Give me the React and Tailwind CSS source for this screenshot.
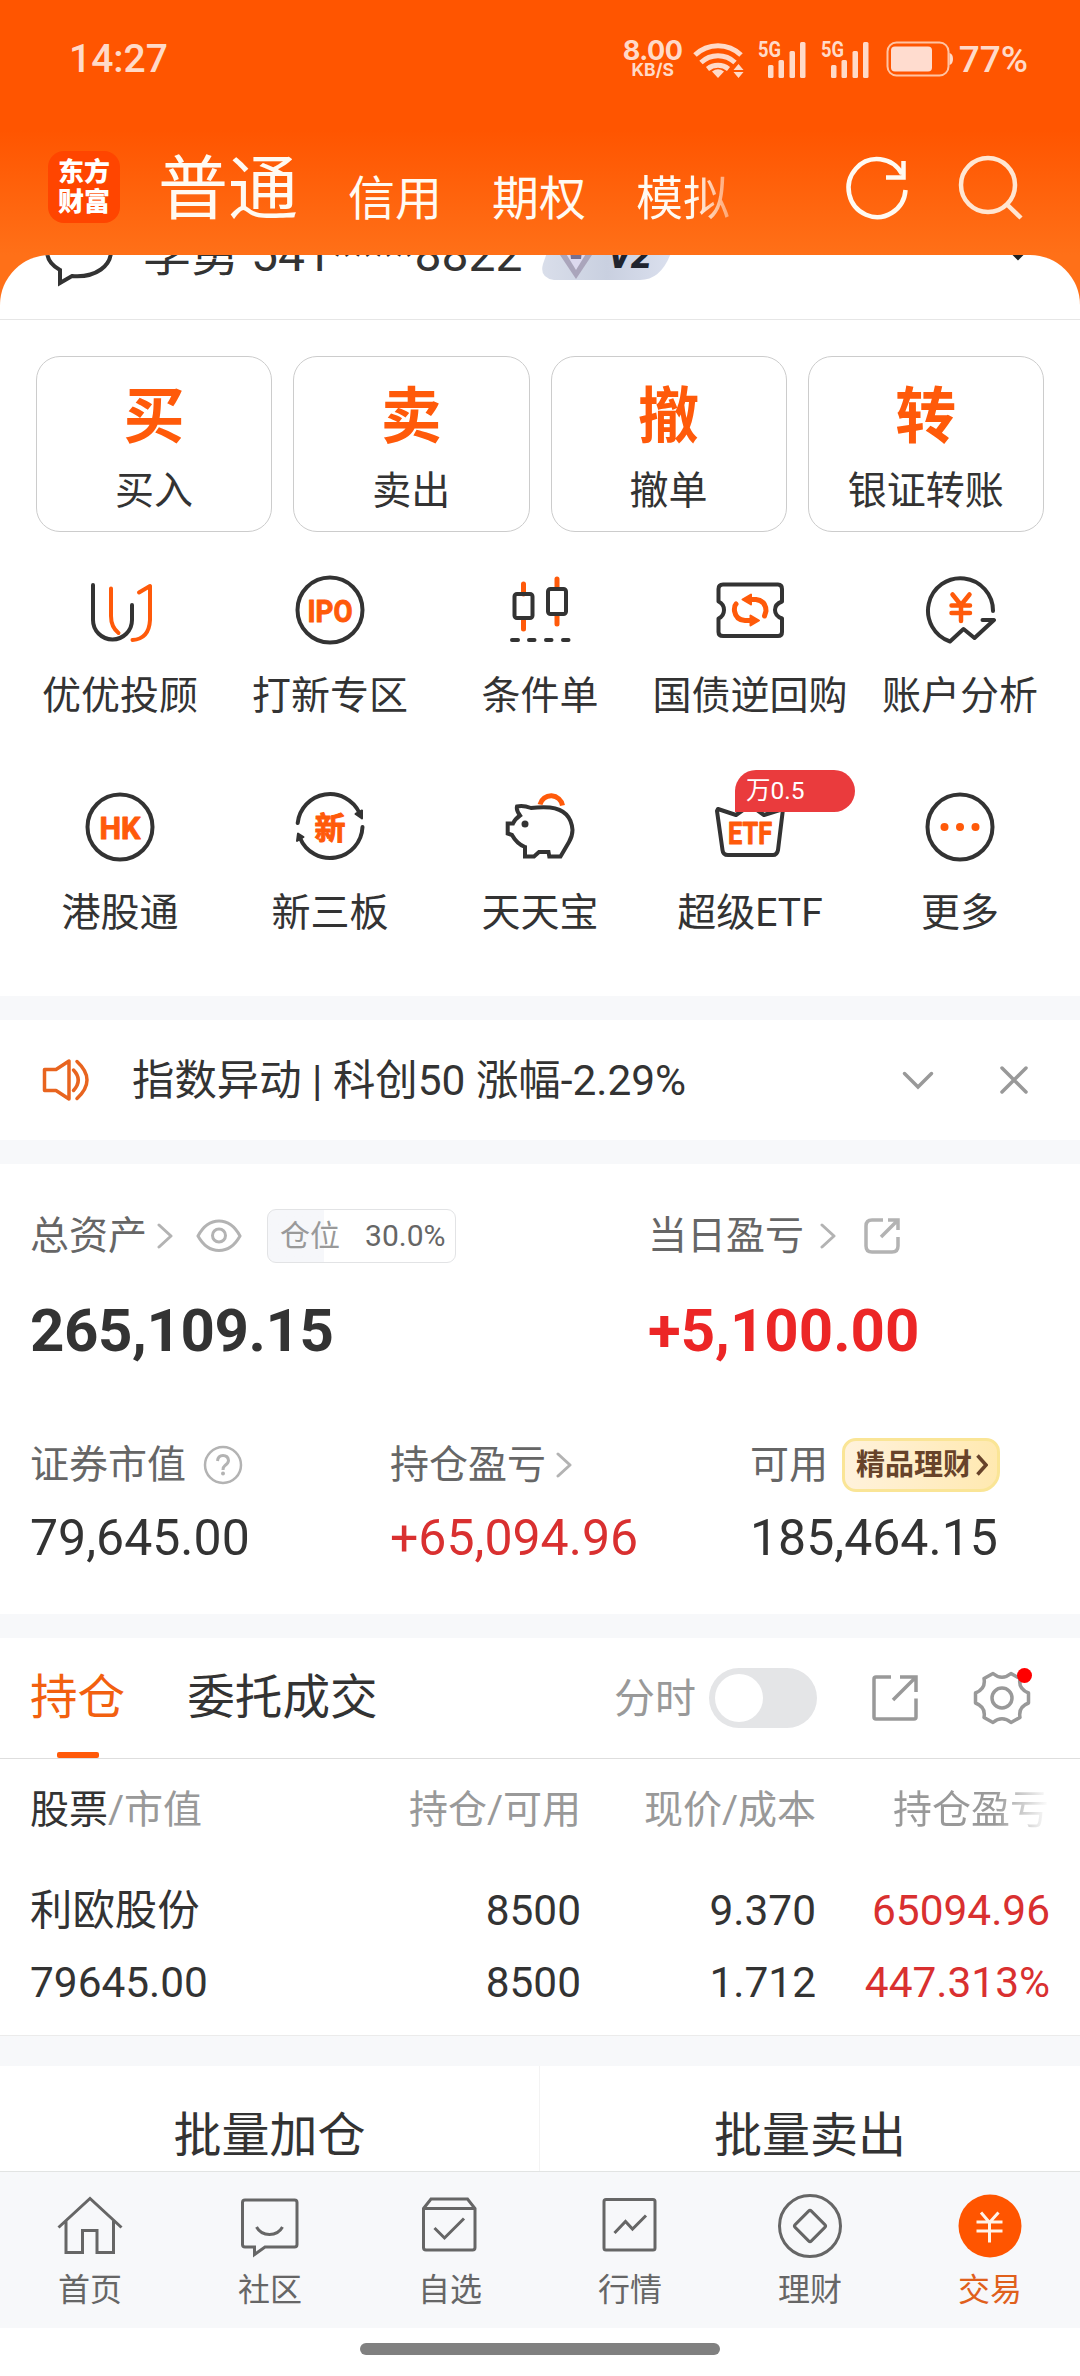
import React from "react";

const INK = "#333333";
const ORANGE = "#ff5a0a";

const tradeActions = [
  { glyph: "买", label: "买入" },
  { glyph: "卖", label: "卖出" },
  { glyph: "撤", label: "撤单" },
  { glyph: "转", label: "银证转账" },
];

const IconBox = ({ children }) => (
  <svg
    viewBox="0 0 72 72"
    className="size-[72px]"
    fill="none"
    stroke={INK}
    strokeWidth="4"
    strokeLinecap="round"
    strokeLinejoin="round"
  >
    {children}
  </svg>
);

const IconText = ({ y, size, width, children }) => (
  <text
    x="36"
    y={y}
    fontSize={size}
    fontWeight="700"
    textAnchor="middle"
    textLength={width}
    lengthAdjust="spacingAndGlyphs"
    fill={ORANGE}
    stroke={ORANGE}
    strokeWidth="1"
  >
    {children}
  </text>
);

const services = [
  {
    label: "优优投顾",
    icon: (
      <IconBox>
        <path d="M9 11V46a19.500 19.500 0 0 0 39 0V31" />
        <path d="M27 14.500V42Q27 53 34.500 59M55 18.500L66 12V46Q65 65 48.500 66" stroke={ORANGE} />
      </IconBox>
    ),
  },
  {
    label: "打新专区",
    icon: (
      <IconBox>
        <circle cx="36" cy="36" r="32.500" />
        <IconText y="47.500" size="32" width="45">IPO</IconText>
      </IconBox>
    ),
  },
  {
    label: "条件单",
    icon: (
      <IconBox>
        <path d="M19.500 10V20M19.500 45V55M53 5V14M53 41V50" stroke={ORANGE} strokeWidth="5" />
        <rect x="10.500" y="20" width="18" height="24" rx="2.500" />
        <rect x="44" y="15" width="18" height="25" rx="2.500" />
        <path d="M8 66h6M25 66h5.500M42 66h5.500M59 66h5.500" />
      </IconBox>
    ),
  },
  {
    label: "国债逆回购",
    icon: (
      <IconBox>
        <path d="M9 10.500H64Q68 10.500 68 15V27.500Q61 30 61 36T68 44.500V58Q68 62 64 62H9Q4.500 62 4.500 58V44.500Q10 42 10 36T4.500 27.500V15Q4.500 10.500 9 10.500Z" />
        <g stroke={ORANGE} strokeWidth="5">
          <path d="M34 25.500H42Q52 27 52 37L50.500 42M22 30Q20 32 20.500 37Q22 46 31 46.500H38" />
          <path d="M28.500 25.500l8.500-5v10zM45 46.500l-8.500-5v10z" fill={ORANGE} strokeWidth="2" />
        </g>
      </IconBox>
    ),
  },
  {
    label: "账户分析",
    icon: (
      <IconBox>
        <path d="M69 37A32.500 32.500 0 1 0 26 67.500L39.500 55L50.500 64L70 46H58.500" />
        <path d="M28.500 20.500L37 31L45.500 20.500M37 31V47M27.500 31.500H46M27.500 39H46" stroke={ORANGE} strokeWidth="4.500" />
      </IconBox>
    ),
  },
  {
    label: "港股通",
    icon: (
      <IconBox>
        <circle cx="36" cy="36" r="32.500" />
        <IconText y="47.500" size="32" width="41">HK</IconText>
      </IconBox>
    ),
  },
  {
    label: "新三板",
    icon: (
      <IconBox>
        <path d="M3.700 32A32.500 32.500 0 0 1 65.500 22M68.500 36A32.500 32.500 0 0 1 6 47" />
        <path d="M61.500 23L68 19.500V27.500ZM4 42.500L3 50L9.500 46Z" fill={INK} strokeWidth="2" />
        <IconText y="47.500" size="31" width="31">新</IconText>
      </IconBox>
    ),
  },
  {
    label: "天天宝",
    icon: (
      <IconBox>
        <path
          d="M27 17Q19 14 13 15.500Q12 19 16 24.500Q11 28 9 32.500H3.700V42.500L8 44Q13 53 21 56V65.500H30L35 61H44.500L45.300 65.500H56.500L65 51Q68.500 45 68.500 39Q67 19 46 16.500Q36 16 27 17Z"
          strokeLinejoin="miter"
        />
        <path d="M36 13.500A11.500 11.500 0 0 1 58.500 14.500" stroke={ORANGE} strokeWidth="5" strokeLinecap="butt" />
        <circle cx="21" cy="33" r="3.500" fill={INK} stroke="none" />
      </IconBox>
    ),
  },
  {
    label: "超级ETF",
    badge: "万0.5",
    icon: (
      <IconBox>
        <path d="M4 18L22 24L36 14L50 24L69 18L64 59Q63 64 59 64H14Q9 64 8.500 59L3 20Z" />
        <IconText y="52.500" size="32" width="44">ETF</IconText>
      </IconBox>
    ),
  },
  {
    label: "更多",
    icon: (
      <IconBox>
        <circle cx="36" cy="36" r="32.500" />
        <g fill={ORANGE} stroke="none">
          <circle cx="20.500" cy="36" r="4" />
          <circle cx="36" cy="36" r="4" />
          <circle cx="51.500" cy="36" r="4" />
        </g>
      </IconBox>
    ),
  },
];

const navItems = [
  {
    label: "首页",
    icon: <path d="M4.500 37.500L36 8.500L67.500 37.500M12 31V62.500H28.500V40.500H43V62.500H59.500V31" />,
  },
  {
    label: "社区",
    icon: (
      <path d="M11 10H60.500Q63 10 63 12.500V54.500Q63 57 60.500 57H31L20.500 64.500V57H11Q8.500 57 8.500 54.500V12.500Q8.500 10 11 10ZM22.500 37C28 47 43 47 48.500 37" />
    ),
  },
  {
    label: "自选",
    icon: (
      <path d="M9.500 18.500L17 9H53.500L61 18.500V57.500Q61 60 58.500 60H12Q9.500 60 9.500 57.500ZM9.500 18.500H61M20.500 38L30.500 48L50 28.500" />
    ),
  },
  {
    label: "行情",
    icon: (
      <>
        <rect x="10" y="9.500" width="51" height="50.500" rx="2" />
        <path d="M20.500 43L31.500 31.500L38.500 39L52 25.500" />
      </>
    ),
  },
  {
    label: "理财",
    icon: (
      <>
        <circle cx="36" cy="36" r="30.500" />
        <rect x="24.500" y="24.500" width="23" height="23" rx="2" transform="rotate(45 36 36)" />
      </>
    ),
  },
  {
    label: "交易",
    active: true,
    icon: (
      <>
        <circle cx="36" cy="36" r="31.500" fill="#ff5500" stroke="none" />
        <path d="M27 22.500L35.500 32.500L44.500 22.500M35.500 32.500V52.500M22.500 32H48.500M22.500 41H48.500" stroke="#fff3e8" />
      </>
    ),
  },
];

const Signal = () => (
  <svg viewBox="0 0 50 38" className="h-[38px] w-[50px] overflow-visible" fill="#ffdac8">
    <text x="0" y="16.500" fontSize="22" fontWeight="700" textLength="23" lengthAdjust="spacingAndGlyphs">
      5G
    </text>
    <rect x="10" y="25" width="5.500" height="13" rx="1.500" />
    <rect x="20.500" y="20" width="5.500" height="18" rx="1.500" />
    <rect x="31.500" y="11" width="5.500" height="27" rx="1.500" />
    <rect x="42" y="2" width="5.500" height="36" rx="1.500" />
  </svg>
);

const StatusBar = () => (
  <div className="flex h-[118px] items-center justify-between pl-[69px] pr-[52px] text-[#ffdac8]">
    <span className="text-[39px] font-medium leading-none">14:27</span>
    <div className="flex items-center">
      <div className="flex w-[62px] flex-col items-center font-['Inter']">
        <span className="text-[27px] font-bold leading-[21px] tracking-[-0.5px]">8.00</span>
        <span className="text-[17.500px] font-bold leading-[18px]">KB/S</span>
      </div>
      <svg viewBox="0 0 54 40" className="ml-[8px] h-10 w-[54px]" fill="none" stroke="#ffdac8" strokeWidth="5">
        <path d="M3 16A33 33 0 0 1 49 16M9 23.500A25 25 0 0 1 43 23.500M15.500 30A17 17 0 0 1 36.500 30" />
        <path d="M26 39l-6-6.500q6-4.500 12 0zM46 31h-4.500l5-6 5 6zM46 33h-4.500l5 6 5-6z" fill="#ffdac8" stroke="none" />
      </svg>
      <div className="ml-3 flex gap-[13px]">
        <Signal />
        <Signal />
      </div>
      <svg viewBox="0 0 68 36" className="ml-[15px] h-9 w-[68px]" fill="none" stroke="#ffc3a3" strokeWidth="2">
        <rect x="1.500" y="1.500" width="61" height="33" rx="9" />
        <rect x="5" y="5.500" width="41" height="25" rx="4" fill="#ffdccf" stroke="none" />
        <path d="M63.500 12q3.500 1 3.500 6t-3.500 6z" fill="#ffdac8" stroke="none" />
      </svg>
      <span className="ml-[5px] text-[37px] font-medium leading-none">77%</span>
    </div>
  </div>
);

const TopTabs = () => (
  <div className="flex h-[137px] items-start pl-12">
    <div className="mt-[33px] flex size-[72px] flex-col items-center justify-center rounded-2xl bg-[#ff4500] text-[26px] font-black leading-[30px] text-white">
      <span>东方</span>
      <span>财富</span>
    </div>
    <div className="ml-[38px] mt-[36px] flex w-[610px] items-end whitespace-nowrap text-[47px] leading-[50px] text-[#fffaf2]">
      <span className="text-[70px] leading-[72px]">普通</span>
      <span className="mb-[2px] ml-[50px]">信用</span>
      <span className="mb-[2px] ml-[50px]">期权</span>
      <span className="mb-[2px] ml-[50px] bg-gradient-to-r from-[#fffaf2] from-60% to-white/40 bg-clip-text text-transparent">
        模拟
      </span>
    </div>
    <svg viewBox="0 0 72 72" className="ml-[73px] mt-[35px] size-[72px]" fill="none" stroke="#fffaf2" strokeWidth="4.500">
      <path d="M64.500 37A28.500 29 0 1 1 61 21M62.500 8V24.500H45" />
    </svg>
    <svg viewBox="0 0 72 72" className="ml-[39px] mt-[35px] size-[72px]" fill="none" stroke="#ffe6d2" strokeWidth="4.500">
      <circle cx="36" cy="32" r="27" />
      <path d="M54.500 51L69 65" />
    </svg>
  </div>
);

const AccountRow = () => (
  <div className="h-[65px] overflow-hidden border-b border-[#e6e6e6]">
    <div className="-mt-8 flex h-16 items-center pl-[45px] text-[#333333]">
      <svg viewBox="0 0 68 64" className="h-16 w-[68px] overflow-visible" fill="none" stroke={INK} strokeWidth="4">
        <path d="M15 47V60L27 53C52 55 66 42 66 28C66 12 52 2 34 2S2 12 2 28Q2 40 15 47Z" />
      </svg>
      <span className="ml-[30px] text-[48px] leading-none">李勇 541****8822</span>
      <svg viewBox="0 0 130 50" className="ml-5 h-[50px] w-[130px]">
        <defs>
          <linearGradient id="pill" x1="0" x2="1">
            <stop offset="0" stopColor="#d9deea" />
            <stop offset="0.5" stopColor="#c9d0e0" />
            <stop offset="1" stopColor="#dbe0ee" />
          </linearGradient>
        </defs>
        <path d="M26 0H118Q132 0 130 20Q120 50 98 50H12Q-3 48 1 34L8 14Q14 0 26 0Z" fill="url(#pill)" />
        <path d="M16 22L26 10H42L52 22L34 49Z" fill="#aaa5bb" />
        <path d="M23 22L28 15H40L45 22L34 40Z" fill="#dcd9ee" />
        <path d="M28 21h12l-1 8h-10z" fill="#77708f" />
        <text x="66" y="38" fontSize="36" fontWeight="900" fontStyle="italic" fill="#20242e">
          V2
        </text>
      </svg>
      <svg viewBox="0 0 34 20" className="mb-1 ml-auto mr-[45px] h-5 w-[34px]" fill="none" stroke="#222" strokeWidth="3.500">
        <path d="M3 1L17 15L31 1" />
      </svg>
    </div>
  </div>
);

const Arrow = ({ className }) => (
  <svg viewBox="0 0 16 26" className={className} fill="none" stroke="#b3b3b3" strokeWidth="3" strokeLinecap="round" strokeLinejoin="round">
    <path d="M2 2L14 13L2 24" />
  </svg>
);

const NoticeBar = () => (
  <div className="flex h-[120px] items-center pl-[42px] pr-[51px]">
    <svg viewBox="0 0 50 44" className="h-11 w-[50px]" fill="none" stroke="#e8641f" strokeWidth="3.500" strokeLinejoin="round" strokeLinecap="round">
      <path d="M2.500 11.500H14L27 3V41L14 32.500H2.500ZM31.500 12Q41 22 31.500 32.500M35 3.500Q55 22 35 40.500" />
    </svg>
    <span className="ml-10 pt-[3px] text-[42.400px] leading-none text-[#333333]">指数异动 | 科创50 涨幅-2.29%</span>
    <svg viewBox="0 0 32 20" className="ml-auto h-5 w-8" fill="none" stroke="#999" strokeWidth="3.500" strokeLinecap="round">
      <path d="M2.500 3.500L16 17L29.500 3.500" />
    </svg>
    <svg viewBox="0 0 30 30" className="ml-[65px] size-[30px]" fill="none" stroke="#999" strokeWidth="3.500" strokeLinecap="round">
      <path d="M3 3L27 27M27 3L3 27" />
    </svg>
  </div>
);

const Assets = () => (
  <div className="h-[450px] pl-[30px] pt-[45px] text-[39px] text-[#666666]">
    <div className="flex h-[54px] items-center leading-none">
      <div className="flex w-[618px] items-center">
        <span>总资产</span>
        <Arrow className="ml-[10px] h-[26px] w-4" />
        <svg viewBox="0 0 46 34" className="ml-[23px] h-[34px] w-[46px]" fill="none" stroke="#b3b3b3" strokeWidth="3">
          <path d="M2 17Q10 2 23 2T44 17Q36 31.500 23 31.500T2 17Z" />
          <circle cx="23" cy="16.500" r="6.500" />
        </svg>
        <div className="ml-[25px] flex h-[54px] w-[189px] items-center rounded-[9px] border border-[#e2e3e5] bg-gradient-to-r from-[#f6f7fa] from-30% to-white to-30% pl-3 text-[30px]">
          <span className="text-[#999999]">仓位</span>
          <span className="ml-[25px]">30.0%</span>
        </div>
      </div>
      <span>当日盈亏</span>
      <Arrow className="ml-4 h-[26px] w-4" />
      <svg viewBox="0 0 36 36" className="ml-7 size-9" fill="none" stroke="#b3b3b3" strokeWidth="3.500">
        <path d="M19 2H8Q2 2 2 8V28Q2 34 8 34H28Q34 34 34 28V19M24 2H34V12M33 3L17 19" />
      </svg>
    </div>
    <div className="mt-[38px] flex text-[60px] font-bold leading-[60px]">
      <span className="w-[618px] tracking-[-0.4px] text-[#333333]">265,109.15</span>
      <span className="text-[#ec2626]">+5,100.00</span>
    </div>
    <div className="mt-[77px] flex leading-none">
      <div className="w-[360px]">
        <div className="flex h-[54px] items-center">
          <span>证券市值</span>
          <svg viewBox="0 0 40 40" className="ml-[17px] size-10" fill="none" stroke="#b3b3b3" strokeWidth="2.500">
            <circle cx="20" cy="20" r="18" />
            <path d="M14.500 16Q15 10.500 20 10.500T25.500 15.500Q25.500 18 22 20.500Q20 22 20 25" strokeWidth="3" />
            <circle cx="20" cy="28.500" r="2" fill="#b3b3b3" stroke="none" />
          </svg>
        </div>
        <p className="mt-[21px] text-[50px] leading-[50px] text-[#333333]">79,645.00</p>
      </div>
      <div className="w-[360px]">
        <div className="flex h-[54px] items-center">
          <span>持仓盈亏</span>
          <Arrow className="ml-[10px] h-[26px] w-4" />
        </div>
        <p className="mt-[21px] text-[50px] leading-[50px] text-[#d93030]">+65,094.96</p>
      </div>
      <div>
        <div className="flex h-[54px] items-center">
          <span>可用</span>
          <div className="ml-[14px] flex h-[54px] w-[158px] items-center rounded-[14px] rounded-br-[20px] border-3 border-[#fae596] bg-gradient-to-r from-[#fff2dc] to-[#ffe9b0] pl-[11px] text-[29px] font-bold text-[#67432a]">
            精品理财
            <svg viewBox="0 0 12 22" className="ml-1 h-[22px] w-3" fill="none" stroke="#67432a" strokeWidth="3.500">
              <path d="M1.500 1.500L10 11L1.500 20.500" />
            </svg>
          </div>
        </div>
        <p className="mt-[21px] text-[50px] leading-[50px] text-[#333333]">185,464.15</p>
      </div>
    </div>
  </div>
);

const HoldingTabs = () => (
  <div className="flex h-[121px] items-center border-b border-[#dedede] pl-[30px] text-[47.600px] leading-none">
    <div className="relative flex h-[120px] items-center pt-[2px] text-[#f2600f]">
      持仓
      <span className="absolute bottom-0 left-[27px] h-[6px] w-[42px] rounded-[2px] bg-[#ff5a0a]" />
    </div>
    <span className="ml-[62px] pt-[2px] text-[#333333]">委托成交</span>
    <span className="ml-auto pt-[2px] text-[41px] text-[#999999]">分时</span>
    <div className="ml-[13px] h-[60px] w-[108px] rounded-full bg-[#e4e5e7] p-[6px]">
      <div className="size-12 rounded-full bg-white" />
    </div>
    <svg viewBox="0 0 48 48" className="ml-[54px] size-12" fill="none" stroke="#999" strokeWidth="3.500">
      <path d="M20 3H5Q3 3 3 5V43Q3 45 5 45H43Q45 45 45 43V24.500M29 3H45V18M44 4L22 26" />
    </svg>
    <div className="relative ml-[54px] mr-[49px]">
      <svg viewBox="0 0 58 58" className="size-[58px]" fill="none" stroke="#999" strokeWidth="3.500" strokeLinejoin="round">
        <path d="M20 4.500Q29 12 38 4.500L47 9.500Q45 20 55.500 24V34Q45 38 47 48.500L38 53.500Q29 46 20 53.500L11 48.500Q13 38 2.500 34V24Q13 20 11 9.500Z" />
        <circle cx="29" cy="29" r="10" />
      </svg>
      <span className="absolute -top-px left-[44px] size-[15px] rounded-full bg-[#ff0000]" />
    </div>
  </div>
);

const HoldingTable = () => (
  <div className="h-[277px] border-b border-[#ebebeb] pt-[26px]">
    <div className="grid grid-cols-[301px_250px_235px_233px] pl-[30px] text-right text-[39px] leading-[50px] text-[#999999]">
      <span className="text-left">
        <span className="text-[#333333]">股票</span>/市值
      </span>
      <span>持仓/可用</span>
      <span>现价/成本</span>
      <span className="ml-auto bg-gradient-to-r from-[#999999] from-65% to-white bg-clip-text text-transparent">持仓盈亏</span>
    </div>
    <div className="mt-[40px] grid grid-cols-[301px_250px_235px_234px] pl-[30px] text-right text-[42.400px] leading-[72px] text-[#333333]">
      <span className="text-left">利欧股份</span>
      <span>8500</span>
      <span>9.370</span>
      <span className="text-[#d93030]">65094.96</span>
      <span className="text-left">79645.00</span>
      <span>8500</span>
      <span>1.712</span>
      <span className="text-[#d93030]">447.313%</span>
    </div>
  </div>
);

const BottomNav = () => (
  <div className="grid h-[157px] grid-cols-6 border-t border-[#e2e4e3] bg-[#f7f8fa] pt-[18px]">
    {navItems.map((item) => (
      <div key={item.label} className="flex flex-col items-center">
        <svg viewBox="0 0 72 72" className="size-[72px]" fill="none" stroke="#666" strokeWidth="3">
          {item.icon}
        </svg>
        <span
          className={
            item.active
              ? "mt-[11px] text-[32px] leading-[34px] text-[#e0601c]"
              : "mt-[11px] text-[32px] leading-[34px] text-[#666666]"
          }
        >
          {item.label}
        </span>
      </div>
    ))}
  </div>
);

const App = () => {
  return (
    <div className="h-[2376px] w-[1080px] overflow-hidden bg-[linear-gradient(180deg,#ff5500_0px,#ff5500_130px,#ff7018_255px,#ff7018_330px)] font-['Roboto','Noto_Sans_CJK_SC',sans-serif]">
      <StatusBar />
      <TopTabs />
      <div className="h-[2121px] overflow-hidden rounded-t-[50px] bg-white">
        <AccountRow />

        <div className="grid grid-cols-4 gap-[21px] px-[36px] pt-[36px]">
          {tradeActions.map((action) => (
            <div key={action.label} className="flex h-[176px] flex-col items-center rounded-3xl border border-[#cccccc] pt-[29px]">
              <span className="text-[61px] font-bold leading-[62px] text-[#ff5a0a]">{action.glyph}</span>
              <span className="mt-[23px] text-[39px] leading-10 text-[#333333]">{action.label}</span>
            </div>
          ))}
        </div>

        <div className="grid grid-cols-5 gap-y-[75px] px-[15px] pb-[63px] pt-[42px]">
          {services.map((item) => (
            <div key={item.label} className="flex flex-col items-center">
              <div className="relative">
                {item.icon}
                {item.badge && (
                  <span className="absolute -top-[21px] left-[21px] flex h-[42px] w-[120px] items-center rounded-[21px] rounded-bl-none bg-[#ea3b3d] pl-[11px] text-[24.500px] leading-none text-white">
                    {item.badge}
                  </span>
                )}
              </div>
              <span className="mt-[30px] whitespace-nowrap text-[39px] leading-10 text-[#333333]">{item.label}</span>
            </div>
          ))}
        </div>

        <div className="h-6 bg-[#f7f8fa]" />
        <NoticeBar />
        <div className="h-6 bg-[#f7f8fa]" />
        <Assets />
        <div className="h-6 bg-[#f7f8fa]" />
        <HoldingTabs />
        <HoldingTable />
        <div className="h-[30px] bg-[#f7f8fa]" />

        <div className="grid h-[105px] grid-cols-2 text-center text-[48px] text-[#333333]">
          <span className="border-r border-[#f3f3f3] pt-[36px] leading-[68px]">批量加仓</span>
          <span className="pt-[36px] leading-[68px]">批量卖出</span>
        </div>

        <BottomNav />
        <div className="mx-auto mt-[15px] h-3 w-[360px] rounded-full bg-[#808080]" />
      </div>
    </div>
  );
};

export default App;
